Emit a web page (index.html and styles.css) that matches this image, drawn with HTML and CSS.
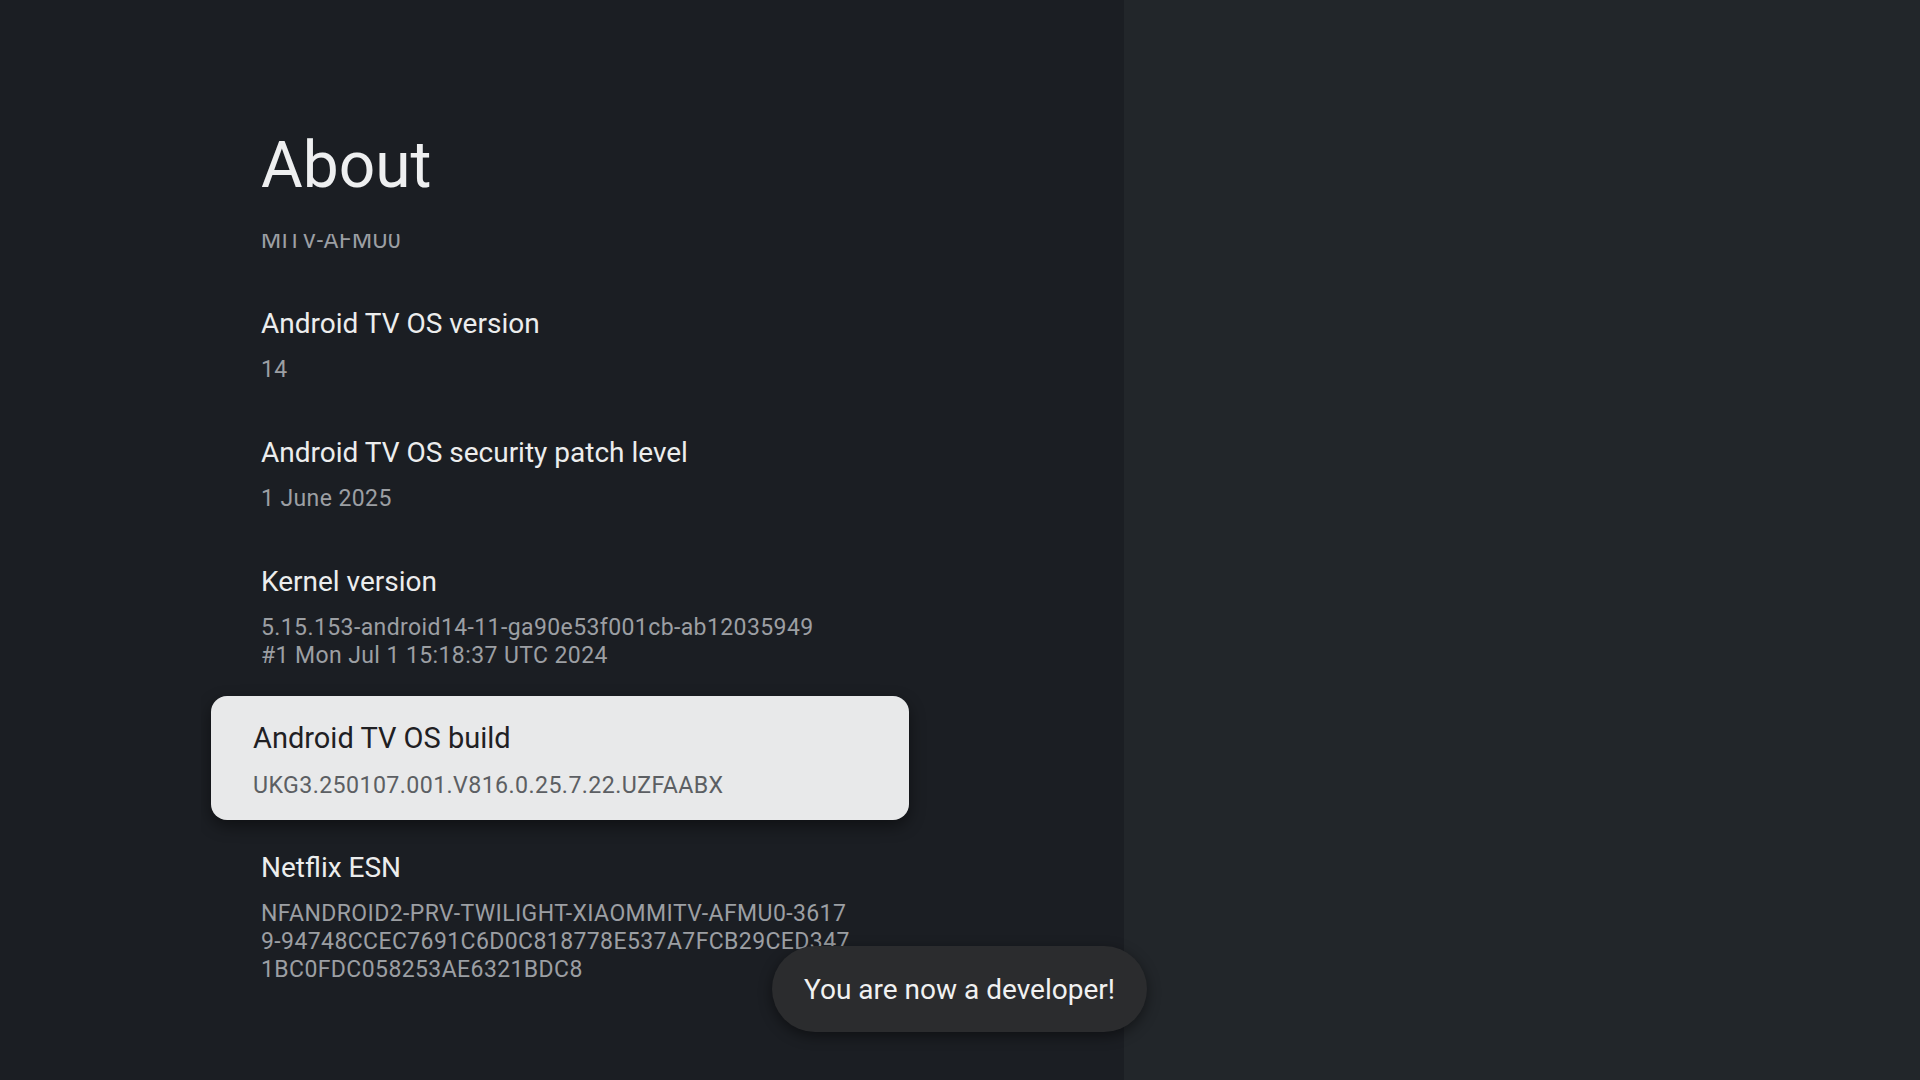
FILE: index.html
```html
<!DOCTYPE html>
<html lang="en">
<head>
<meta charset="utf-8">
<title>About</title>
<link rel="stylesheet" href="styles.css">
</head>
<body>
<div class="screen">
  <section class="panel">
    <h1 class="heading">About</h1>
    <div class="viewport">
      <ul class="list">
        <li class="item">
          <div class="title">Model</div>
          <div class="sub">MITV-AFMU0</div>
        </li>
        <li class="item">
          <div class="title">Android TV OS version</div>
          <div class="sub">14</div>
        </li>
        <li class="item">
          <div class="title">Android TV OS security patch level</div>
          <div class="sub">1 June 2025</div>
        </li>
        <li class="item">
          <div class="title">Kernel version</div>
          <div class="sub">5.15.153-android14-11-ga90e53f001cb-ab12035949<br>#1 Mon Jul 1 15:18:37 UTC 2024</div>
        </li>
        <li class="item focused">
          <div class="title">Android TV OS build</div>
          <div class="sub">UKG3.250107.001.V816.0.25.7.22.UZFAABX</div>
        </li>
        <li class="item">
          <div class="title">Netflix ESN</div>
          <div class="sub">NFANDROID2-PRV-TWILIGHT-XIAOMMITV-AFMU0-3617<br>9-94748CCEC7691C6D0C818778E537A7FCB29CED347<br>1BC0FDC058253AE6321BDC8</div>
        </li>
      </ul>
    </div>
  </section>
  <section class="side"></section>
  <div class="toast">You are now a developer!</div>
</div>
</body>
</html>
```
FILE: styles.css
```css
html, body {
  margin: 0;
  padding: 0;
  width: 1920px;
  height: 1080px;
  overflow: hidden;
  background: #1c1f24;
  font-family: Roboto, "Noto Sans", "Liberation Sans", sans-serif;
}

.screen {
  position: relative;
  display: flex;
  width: 1920px;
  height: 1080px;
}

.panel {
  width: 1124px;
  height: 1080px;
  background: #1b1e23;
  padding: 128px 0 0 261px;
  box-sizing: border-box;
  display: flex;
  flex-direction: column;
}

.side {
  flex: 1;
  background: #22262a;
}

.heading {
  margin: 0;
  font-size: 64px;
  line-height: 76px;
  font-weight: 400;
  color: #eeeff0;
}

.viewport {
  margin-top: 30px;
  width: 700px;
  flex: 1;
  overflow: hidden;
  padding-left: 60px;
  margin-left: -60px;
}

.list {
  list-style: none;
  margin: -82px 0 0 0;
  padding: 0;
  width: 598px;
}

.item {
  padding: 25px 0 26px;
}

.title {
  font-size: 28px;
  line-height: 36px;
  color: #eceded;
}

.sub {
  margin-top: 14px;
  font-size: 23px;
  line-height: 28px;
  letter-spacing: 0.4px;
  color: #9c9fa3;
  white-space: nowrap;
}

.item.focused {
  background: #e8e9ea;
  border-radius: 16px;
  margin: 0 -50px 5px -50px;
  padding: 24px 42px 21px 42px;
  box-shadow: 0 6px 16px rgba(0, 0, 0, 0.45);
}

.item.focused .title {
  color: #1f2023;
  font-size: 29px;
}

.item.focused .sub {
  color: #5c5f63;
  margin-top: 15px;
  font-size: 23.2px;
}

.toast {
  position: absolute;
  left: 772px;
  top: 946px;
  width: 375px;
  height: 86px;
  border-radius: 43px;
  background: #2b2c2e;
  box-shadow: 0 4px 14px rgba(0, 0, 0, 0.45);
  color: #f1f1f1;
  font-size: 28px;
  display: flex;
  align-items: center;
  justify-content: center;
}
```
